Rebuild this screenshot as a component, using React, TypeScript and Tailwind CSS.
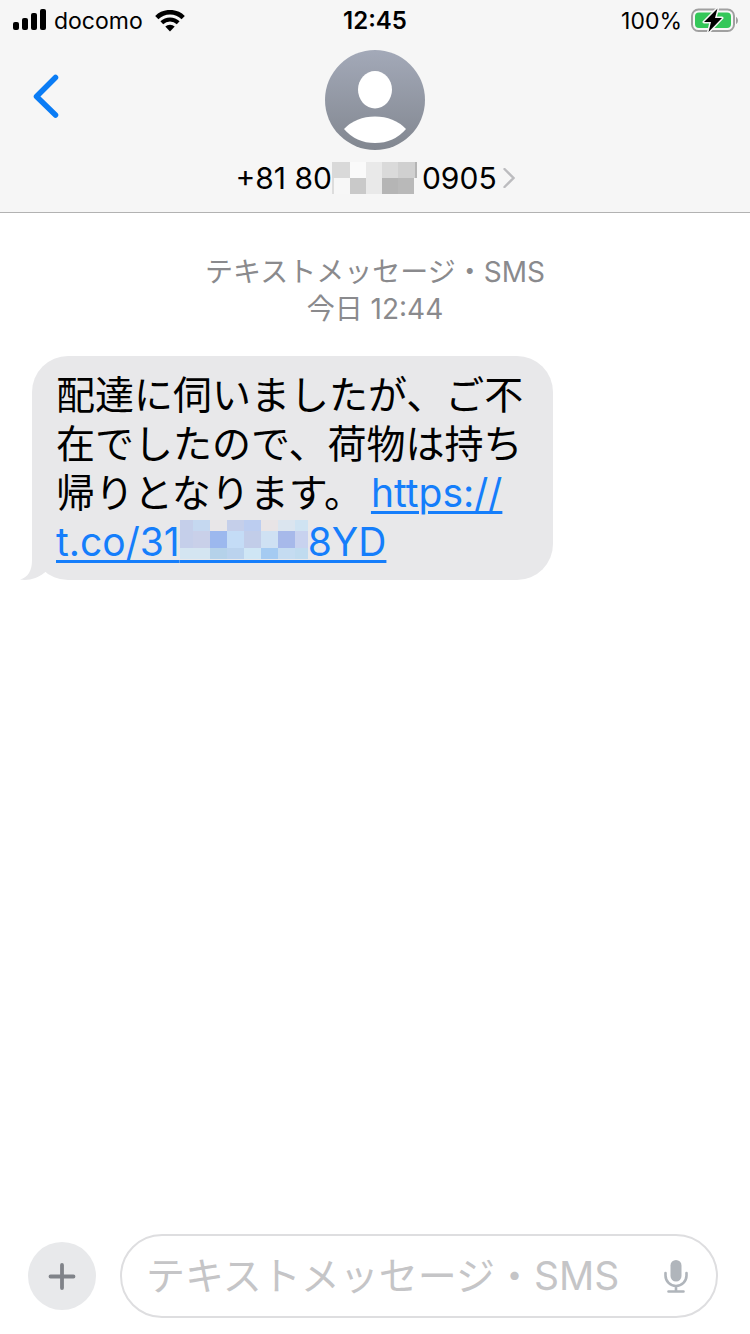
import React from 'react';

type Cell = [x: number, y: number, w: number, h: number, fill: string];

const phoneCells: Cell[] = [
    [0, 0, 18, 16, '#d9d9d9'],
    [18, 0, 16, 16, '#fafafa'],
    [34, 0, 16, 32, '#e9e9e9'],
    [50, 0, 16, 16, '#dadada'],
    [66, 0, 17, 16, '#d0d0d0'],
    [83, 0, 2, 16, '#b5b5b5'],
    [0, 16, 2, 16, '#dddddd'],
    [2, 16, 16, 16, '#f7f7f7'],
    [18, 16, 16, 16, '#c9c9c9'],
    [50, 16, 16, 16, '#b5b5b5'],
    [66, 16, 16, 16, '#b9b9b9'],
];

const linkCells: Cell[] = [
    [0, 0, 13, 28, '#c5cfea'],
    [13, 0, 17, 11, '#c5d8f0'],
    [30, 0, 17, 11, '#e8e6e8'],
    [47, 0, 17, 11, '#c5cfea'],
    [64, 0, 17, 11, '#bccdf0'],
    [81, 0, 17, 11, '#e8e4e6'],
    [98, 0, 17, 11, '#dbe5ef'],
    [115, 0, 13, 11, '#cfe3f2'],
    [13, 11, 17, 17, '#c9d0e9'],
    [30, 11, 17, 17, '#9cb8ee'],
    [47, 11, 17, 17, '#c4dcf6'],
    [64, 11, 17, 17, '#c2cde9'],
    [81, 11, 17, 17, '#cfe1f3'],
    [98, 11, 17, 17, '#a7b9ea'],
    [115, 11, 13, 17, '#c8d2ef'],
    [0, 28, 30, 11, '#d4e5f1'],
    [30, 28, 17, 11, '#b5d2ea'],
    [47, 28, 17, 11, '#bbd3ee'],
    [64, 28, 17, 11, '#cfe6f5'],
    [81, 28, 17, 11, '#a5cbf2'],
    [98, 28, 17, 11, '#c5dcf1'],
    [115, 28, 13, 11, '#c0dbef'],
];

const Mosaic = ({ cells }: { cells: Cell[] }) => (
    <g shapeRendering="crispEdges">
        {cells.map(([x, y, w, h, fill]) => (
            <rect key={`${x}-${y}`} x={x} y={y} width={w} height={h} fill={fill} />
        ))}
    </g>
);

const StatusBar = () => (
    <div className="grid h-[42px] grid-cols-3 items-center px-3 text-[23px]">
        <div className="flex items-center gap-2">
            <svg className="h-[22px] w-[34px] overflow-visible" viewBox="0 0 34 22">
                <rect x="1" y="12" width="6" height="8" rx="2" />
                <rect x="10" y="8" width="6" height="12" rx="2" />
                <rect x="19" y="3" width="6" height="17" rx="2" />
                <rect x="28" y="-1" width="6" height="21" rx="2" />
            </svg>
            <span>docomo</span>
            <svg className="ml-1 h-[22px] w-[30px]" viewBox="0 0 30 22">
                <path d="M1.800 7.600a18.800 18.800 0 0 1 26.400 0" fill="none" stroke="#000" strokeWidth="4.600" />
                <path d="M6.800 12.800a11.700 11.700 0 0 1 16.400 0" fill="none" stroke="#000" strokeWidth="4" />
                <path d="M15 21.500L10.300 16.600a6.800 6.800 0 0 1 9.400 0z" />
            </svg>
        </div>
        <span className="text-center text-2xl font-semibold">12:45</span>
        <div className="flex items-center justify-end gap-2">
            <span>100%</span>
            <svg className="h-[26px] w-[48px]" viewBox="0 0 48 26">
                <rect x="2" y="1.500" width="42" height="21.500" rx="6.500" fill="none" stroke="#a0a0a0" strokeWidth="2" />
                <path d="M46 9c2.600 1 2.600 6 0 7z" fill="#a0a0a0" />
                <rect x="5" y="4.500" width="36" height="15.500" rx="4" fill="#34c759" />
                <path
                    d="M27.500 0.500L14 14h7L18.500 24 32 10h-7z"
                    stroke="#f6f6f6"
                    strokeWidth="3"
                    paintOrder="stroke"
                    strokeLinejoin="round"
                />
            </svg>
        </div>
    </div>
);

const Header = () => (
    <header className="border-b border-[#b2b2b2] bg-[#f6f6f6]">
        <StatusBar />
        <div className="grid grid-cols-[1fr_auto_1fr] pb-[14px] pt-2">
            <button type="button" aria-label="戻る" className="ml-8 mt-6 h-11 w-7 self-start">
                <svg className="h-11 w-7" viewBox="0 0 28 44" fill="none">
                    <path d="M23.500 3.500L4.500 22.500l19 18.500" stroke="#0a7cf5" strokeWidth="5.500" strokeLinecap="round" strokeLinejoin="round" />
                </svg>
            </button>
            <button type="button" className="flex flex-col items-center">
                <svg className="size-[100px]" viewBox="0 0 100 100">
                    <defs>
                        <linearGradient id="avatar" x1="0" y1="0" x2="0" y2="1">
                            <stop offset="0" stopColor="#a3a9b8" />
                            <stop offset="1" stopColor="#828790" />
                        </linearGradient>
                    </defs>
                    <circle cx="50" cy="50" r="50" fill="url(#avatar)" />
                    <ellipse cx="50" cy="39.700" rx="17" ry="18.700" fill="#fff" />
                    <path d="M19 79Q31 66.500 50 66.500T81 79Q69 93 50 93T19 79z" fill="#fff" />
                </svg>
                <span className="mt-2 flex h-10 items-center text-[30px]">
                    +81 80
                    <svg className="mr-1 h-8 w-[86px]" viewBox="0 0 86 32">
                        <Mosaic cells={phoneCells} />
                    </svg>
                    0905
                    <svg className="ml-1.5 h-5 w-3" viewBox="0 0 12 20" fill="none">
                        <path d="M1.500 1L10.500 10l-9 9" stroke="#bcbcbf" strokeWidth="2.400" strokeLinecap="round" />
                    </svg>
                </span>
            </button>
        </div>
    </header>
);

const Message = () => (
    <div className="relative ml-8 mr-auto max-w-[521px] rounded-[36px] bg-[#e8e8ea] px-6 py-[14px] text-[39px] leading-[49px]">
        <svg className="absolute -left-[12px] bottom-0 h-10 w-9" viewBox="0 0 36 40">
            <path d="M12 0V20C12 31 8 37 0 39.500 9 41 18 38 24 33L36 24V0z" fill="#e8e8ea" />
        </svg>
        <p className="relative">
            配達に伺いましたが、ご不在でしたので、荷物は持ち帰りとなります。
            <a href="#" className="ml-2 text-[#157efb] underline decoration-[3px] underline-offset-4">
                https://<wbr />
                <span className="whitespace-nowrap">
                    t.co/31
                    <svg className="inline-block h-[39px] w-[128px] overflow-visible align-[-3px]" viewBox="0 0 128 39">
                        <Mosaic cells={linkCells} />
                        <rect y="40" width="128" height="3" fill="#157efb" />
                    </svg>
                    8YD
                </span>
            </a>
        </p>
    </div>
);

const Composer = () => (
    <form className="flex items-center gap-6 pb-4 pl-7 pr-8" onSubmit={(e) => e.preventDefault()}>
        <button type="button" aria-label="追加" className="flex size-[68px] shrink-0 items-center justify-center rounded-full bg-[#e8e9eb]">
            <svg className="size-7" viewBox="0 0 28 28" fill="none">
                <path d="M14 3v23M2.500 14.500h23" stroke="#808389" strokeWidth="3.800" strokeLinecap="round" />
            </svg>
        </button>
        <div className="flex h-[84px] min-w-0 flex-1 items-center rounded-[42px] border-2 border-[#dedee0] pl-6 pr-7">
            <input
                type="text"
                aria-label="メッセージ"
                placeholder="テキストメッセージ・SMS"
                className="min-w-0 flex-1 bg-transparent text-[39px] outline-none placeholder:text-[#c5c5c7]"
            />
            <button type="button" aria-label="音声入力">
                <svg className="h-9 w-6" viewBox="0 0 24 36" fill="none" stroke="#b0b5bb" strokeWidth="2.600" strokeLinecap="round">
                    <rect x="6.500" y="2" width="11" height="21.500" rx="5.500" fill="#b0b5bb" stroke="none" />
                    <path d="M1.500 15V17.500a10.500 10.500 0 0 0 21 0V15M12 28V33.500M4.500 33.500h15" />
                </svg>
            </button>
        </div>
    </form>
);

const App = () => (
    <div className="flex min-h-screen flex-col bg-white font-[Inter,'Noto_Sans_CJK_JP',sans-serif] text-black">
        <Header />
        <main className="flex flex-1 flex-col">
            <div className="pb-7 pt-[41px] text-center text-[28px] leading-[37px] text-[#8a8a8d]">
                <p>テキストメッセージ・SMS</p>
                <p>今日 12:44</p>
            </div>
            <Message />
        </main>
        <Composer />
    </div>
);

export default App;
